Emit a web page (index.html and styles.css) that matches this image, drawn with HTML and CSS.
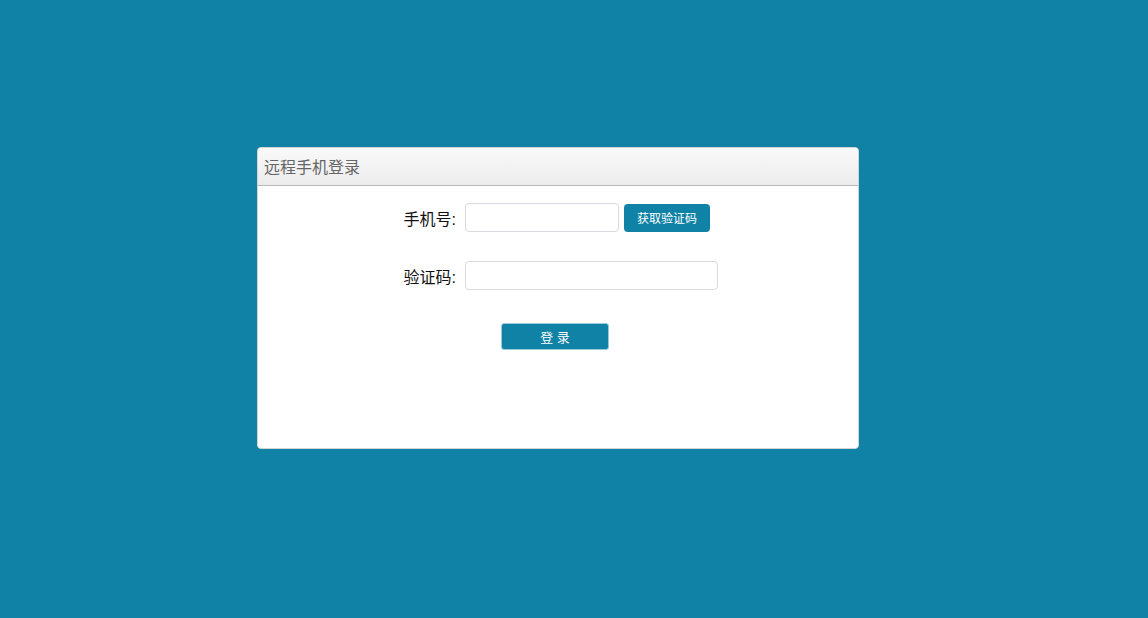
FILE: index.html
```html
<!DOCTYPE html>
<html lang="zh-CN">
<head>
    <meta charset="UTF-8">
    <title>远程手机登录</title>
    <link rel="stylesheet" href="styles.css">
</head>
<body>
    <div class="login-panel">
        <div class="panel-header">远程手机登录</div>
        <div class="panel-body">
            <div class="form-row">
                <label class="form-label" for="phone">手机号:</label>
                <input type="text" id="phone" class="form-input input-short">
                <button class="code-btn">获取验证码</button>
            </div>
            <div class="form-row">
                <label class="form-label" for="code">验证码:</label>
                <input type="text" id="code" class="form-input input-long">
            </div>
            <div class="submit-row">
                <button class="login-btn">登 录</button>
            </div>
        </div>
    </div>
</body>
</html>
```

FILE: styles.css
```css
body {
    background-color: #0f82a6;
    margin: 0;
    padding: 0;
    font-family: "Liberation Sans", "Noto Sans CJK SC", sans-serif;
}

.login-panel {
    width: 600px;
    height: 300px;
    margin: 147px 0 0 257px;
    background-color: #ffffff;
    border: 1px solid #d4d4d4;
    border-radius: 4px;
    overflow: hidden;
}

.panel-header {
    height: 37px;
    line-height: 39px;
    padding-left: 6px;
    font-size: 16px;
    color: #666666;
    background: linear-gradient(to bottom, #f9f9f9, #ececec);
    border-bottom: 1px solid #b9b9b9;
}

.panel-body {
    padding-top: 17px;
}

.form-row {
    display: flex;
    align-items: center;
    height: 29px;
    margin-bottom: 29px;
}

.form-label {
    width: 207px;
    padding-right: 9px;
    box-sizing: border-box;
    text-align: right;
    font-size: 16px;
    color: #111111;
}

.form-input {
    height: 29px;
    box-sizing: border-box;
    border: 1px solid #d9d9df;
    border-radius: 4px;
    padding: 0 6px;
    font-size: 14px;
    outline: none;
}

.input-short {
    width: 154px;
}

.input-long {
    width: 253px;
}

.code-btn {
    margin-left: 5px;
    width: 86px;
    height: 28px;
    background-color: #0f82a6;
    border: none;
    border-radius: 4px;
    color: #ffffff;
    font-family: inherit;
    font-size: 12px;
    cursor: pointer;
}

.submit-row {
    padding-left: 243px;
    padding-top: 4px;
}

.login-btn {
    width: 108px;
    height: 27px;
    background-color: #0f82a6;
    border: 1px solid #9cc9d8;
    border-radius: 3px;
    color: #ffffff;
    font-family: inherit;
    font-size: 13px;
    cursor: pointer;
}
```
